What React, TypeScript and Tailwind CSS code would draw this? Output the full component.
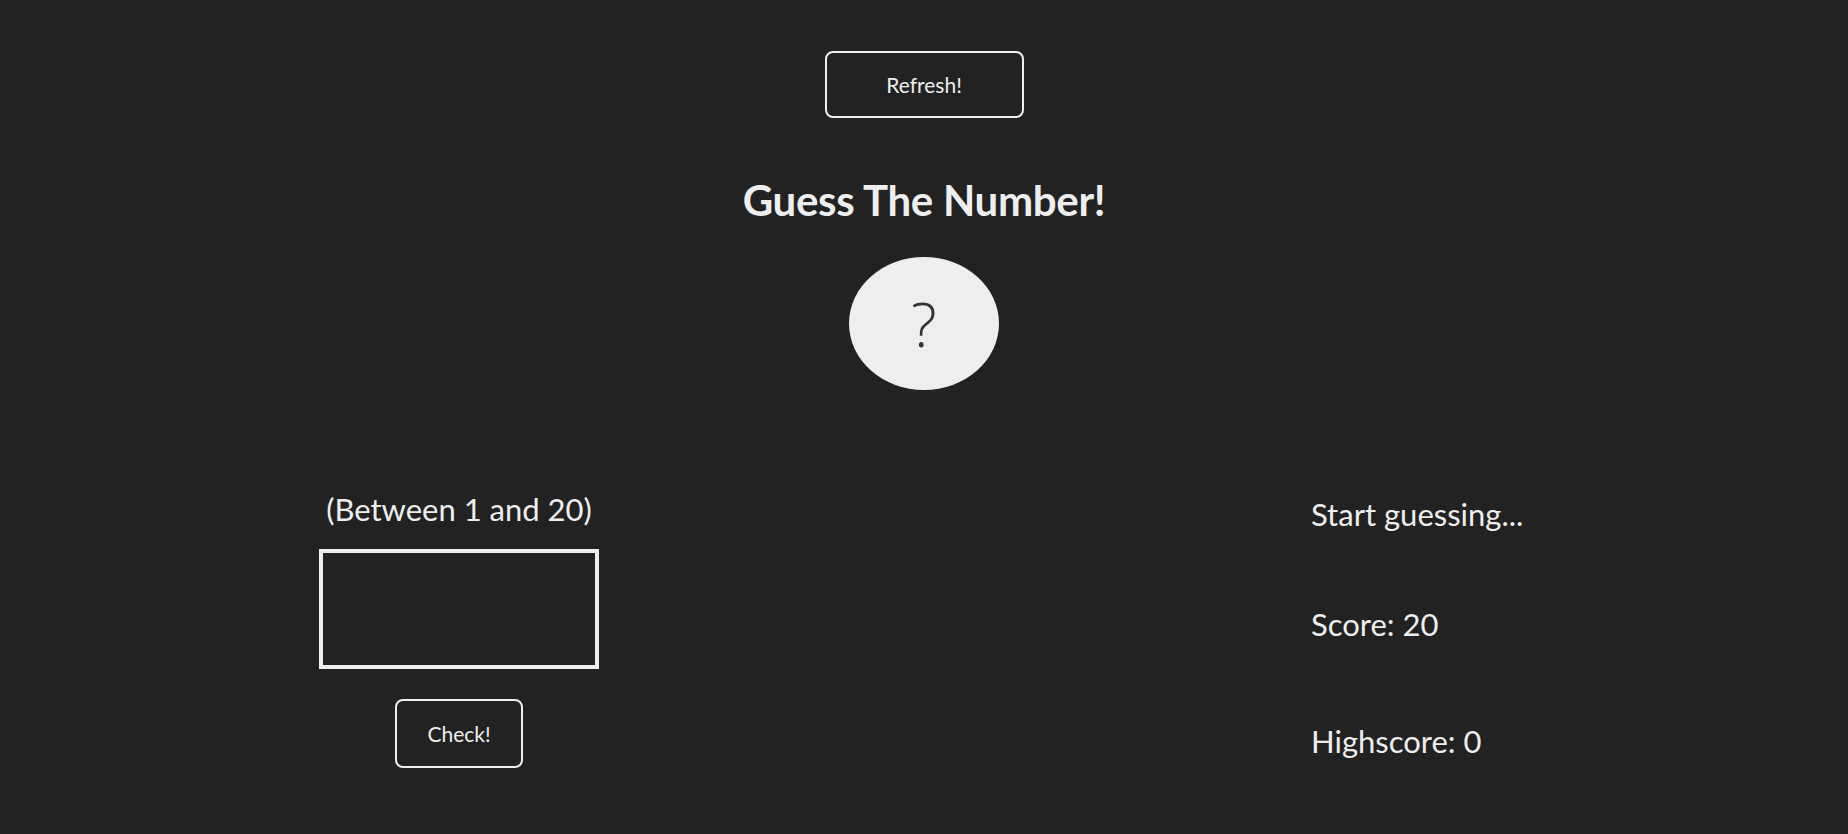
const App = () => {
  return (
    <div className="min-h-[834px] w-full bg-[#222222] text-[#eeeeee] font-['Lato',sans-serif]">
      {/* header */}
      <header className="flex flex-col items-center pt-[51px]">
        <button className="w-[199px] h-[67px] rounded-lg border-2 border-[#eeeeee] text-[21px] text-[#eeeeee]">
          Refresh!
        </button>
        <h1 className="mt-[58px] text-[42px] font-bold leading-[48px] tracking-[-0.3px]">
          Guess The Number!
        </h1>
        <div className="mt-[33px] w-[150px] h-[133px] rounded-[50%] bg-[#eeeeee] flex items-center justify-center">
          <span className="text-[60px] leading-none text-[#333333] font-light font-['Open_Sans',sans-serif]">?</span>
        </div>
      </header>

      {/* game area */}
      <main className="flex pl-[319px] mt-[101px]">
        <section className="w-[280px] flex flex-col items-center">
          <p className="text-[31px] leading-[36px]">(Between 1 and 20)</p>
          <input
            type="number"
            className="mt-[22px] w-[280px] h-[120px] border-4 border-[#eeeeee] bg-transparent outline-none text-[#eeeeee]"
          />
          <button className="mt-[30px] w-[128px] h-[69px] rounded-lg border-2 border-[#eeeeee] text-[21px]">
            Check!
          </button>
        </section>
        <section className="ml-[712px] flex flex-col gap-[74px] pt-[5px] text-[31px] leading-[36px]">
          <p>Start guessing...</p>
          <p>Score: 20</p>
          <p className="mt-[7px]">Highscore: 0</p>
        </section>
      </main>
    </div>
  );
};

export default App;
